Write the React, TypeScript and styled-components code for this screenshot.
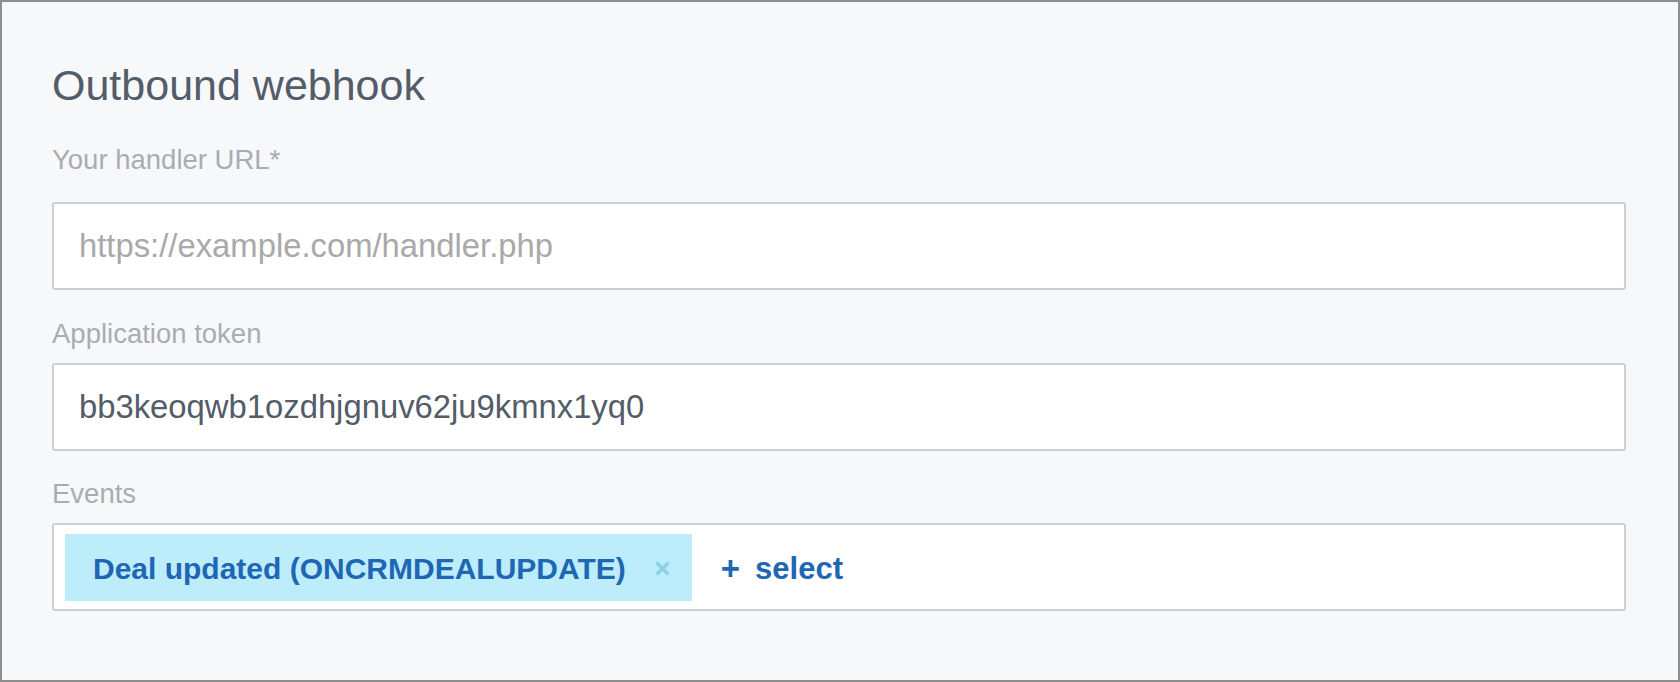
import React from "react";
import styled, { createGlobalStyle } from "styled-components";

const GlobalStyle = createGlobalStyle`
  html, body {
    margin: 0;
    padding: 0;
    background: #ffffff;
  }
  body {
    font-family: "Liberation Sans", Arial, sans-serif;
  }
  * {
    box-sizing: border-box;
  }
`;

const Panel = styled.section`
  width: 1680px;
  height: 682px;
  border: 2px solid #8e8e8e;
  background: #f7f8fa;
  padding: 58px 52px 0 50px;
  display: flex;
  flex-direction: column;
`;

const Title = styled.h1`
  margin: 0 0 34px;
  font-size: 43px;
  line-height: 50px;
  font-weight: 400;
  color: #535c69;
`;

const Label = styled.label<{ $gapAbove: number; $gapBelow: number }>`
  display: block;
  margin-top: ${(p) => p.$gapAbove}px;
  margin-bottom: ${(p) => p.$gapBelow}px;
  font-size: 27.5px;
  line-height: 32px;
  color: #a8adb4;
`;

const TextInput = styled.input`
  display: block;
  width: 100%;
  height: 88px;
  margin: 0;
  padding: 0 25px;
  border: 2px solid #c9d0d6;
  border-radius: 3px;
  background: #ffffff;
  font-family: "Liberation Sans", Arial, sans-serif;
  font-size: 32.8px;
  color: #535c69;
  outline: none;

  &::placeholder {
    color: #a9a9a9;
    opacity: 1;
  }
`;

const EventsBox = styled.div`
  display: flex;
  align-items: center;
  height: 88px;
  padding: 0 11px;
  border: 2px solid #c9d0d6;
  border-radius: 3px;
  background: #ffffff;
`;

const Tag = styled.span`
  display: inline-flex;
  align-items: center;
  gap: 28px;
  height: 67px;
  padding: 3px 21px 0 28px;
  background: #bdedfb;
  color: #1f66b4;
  font-size: 30px;
  font-weight: 700;
`;

const RemoveIcon = styled.svg`
  width: 17px;
  height: 15px;
  display: block;
  margin-top: -1px;
`;

const SelectLink = styled.a`
  display: inline-flex;
  align-items: center;
  margin-left: 29px;
  padding-top: 4px;
  color: #1f66b4;
  font-size: 31px;
  font-weight: 700;
  text-decoration: none;
  cursor: pointer;
`;

const Plus = styled.span`
  font-size: 33px;
  margin-right: 15px;
`;

export default function App() {
  return (
    <>
      <GlobalStyle />
      <Panel>
        <Title>Outbound webhook</Title>

        <Label $gapAbove={0} $gapBelow={26} htmlFor="handler">
          Your handler URL*
        </Label>
        <TextInput id="handler" placeholder="https://example.com/handler.php" />

        <Label $gapAbove={28} $gapBelow={13} htmlFor="token">
          Application token
        </Label>
        <TextInput id="token" defaultValue="bb3keoqwb1ozdhjgnuv62ju9kmnx1yq0" />

        <Label $gapAbove={27} $gapBelow={13}>
          Events
        </Label>
        <EventsBox>
          <Tag>
            Deal updated (ONCRMDEALUPDATE)
            <RemoveIcon viewBox="0 0 17 15" aria-hidden="true">
              <path
                d="M2.5 1.5 L14.5 13.5 M14.5 1.5 L2.5 13.5"
                stroke="#8fcfe9"
                strokeWidth="3.6"
                strokeLinecap="butt"
                fill="none"
              />
            </RemoveIcon>
          </Tag>
          <SelectLink>
            <Plus>+</Plus>select
          </SelectLink>
        </EventsBox>
      </Panel>
    </>
  );
}
